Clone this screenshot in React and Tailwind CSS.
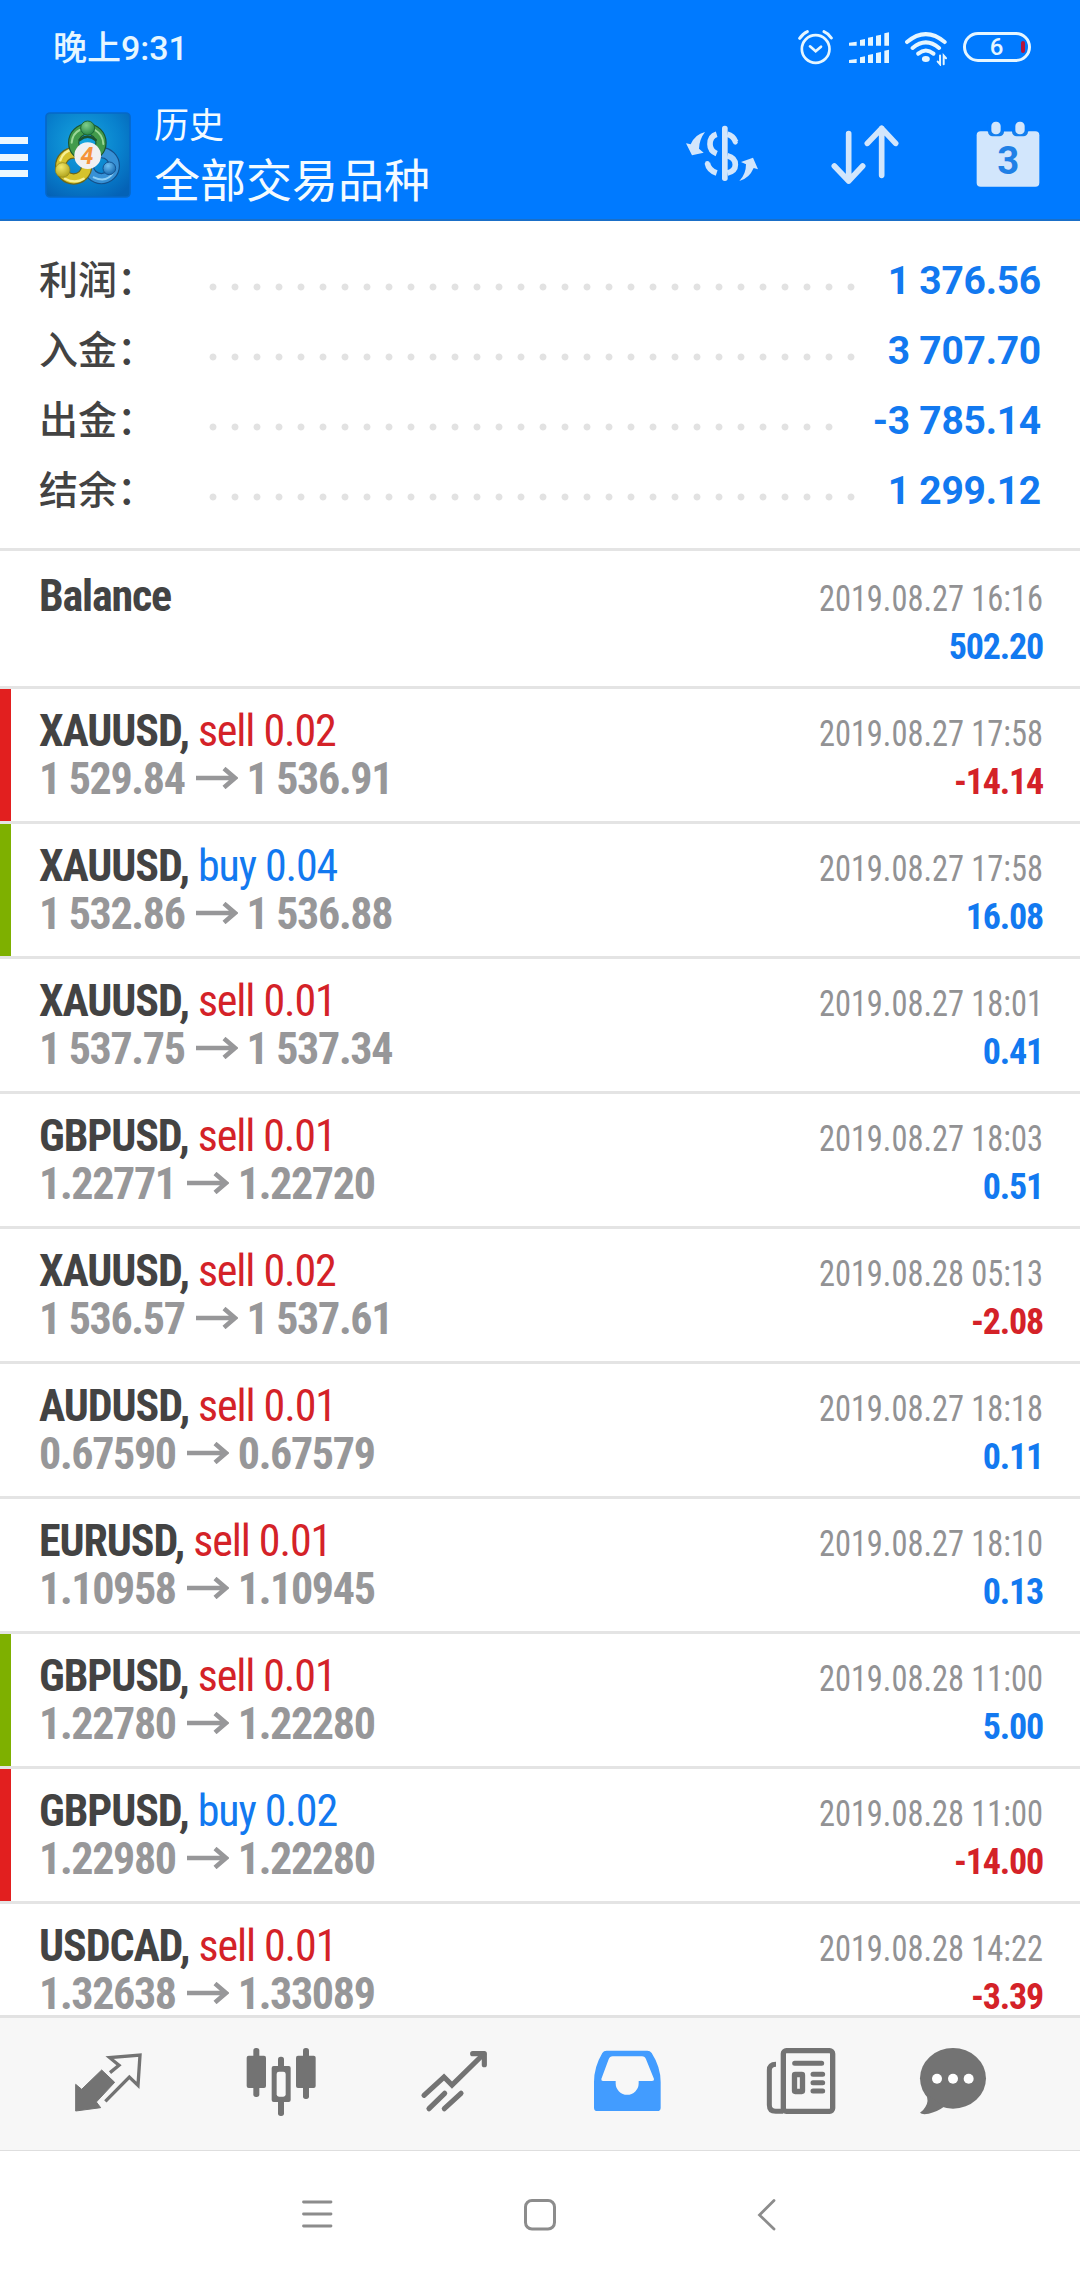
const SUMMARY = [
  { label: '利润：', value: '1 376.56', dots: 'w-[660px]' },
  { label: '入金：', value: '3 707.70', dots: 'w-[660px]' },
  { label: '出金：', value: '-3 785.14', dots: 'w-[638px]' },
  { label: '结余：', value: '1 299.12', dots: 'w-[660px]' },
];

const DEALS = [
  { symbol: 'XAUUSD', side: 'sell', volume: '0.02', open: '1 529.84', close: '1 536.91', time: '2019.08.27 17:58', profit: '-14.14', mark: 'sl' },
  { symbol: 'XAUUSD', side: 'buy', volume: '0.04', open: '1 532.86', close: '1 536.88', time: '2019.08.27 17:58', profit: '16.08', mark: 'tp' },
  { symbol: 'XAUUSD', side: 'sell', volume: '0.01', open: '1 537.75', close: '1 537.34', time: '2019.08.27 18:01', profit: '0.41' },
  { symbol: 'GBPUSD', side: 'sell', volume: '0.01', open: '1.22771', close: '1.22720', time: '2019.08.27 18:03', profit: '0.51' },
  { symbol: 'XAUUSD', side: 'sell', volume: '0.02', open: '1 536.57', close: '1 537.61', time: '2019.08.28 05:13', profit: '-2.08' },
  { symbol: 'AUDUSD', side: 'sell', volume: '0.01', open: '0.67590', close: '0.67579', time: '2019.08.27 18:18', profit: '0.11' },
  { symbol: 'EURUSD', side: 'sell', volume: '0.01', open: '1.10958', close: '1.10945', time: '2019.08.27 18:10', profit: '0.13' },
  { symbol: 'GBPUSD', side: 'sell', volume: '0.01', open: '1.22780', close: '1.22280', time: '2019.08.28 11:00', profit: '5.00', mark: 'tp' },
  { symbol: 'GBPUSD', side: 'buy', volume: '0.02', open: '1.22980', close: '1.22280', time: '2019.08.28 11:00', profit: '-14.00', mark: 'sl' },
  { symbol: 'USDCAD', side: 'sell', volume: '0.01', open: '1.32638', close: '1.33089', time: '2019.08.28 14:22', profit: '-3.39' },
];

const MARKS = { sl: 'bg-[#e21f1f]', tp: 'bg-[#7eb000]' };

/* ---------- status bar ---------- */

const SIGNAL = [
  [0, 23, 12],
  [33, 15, 20],
  [57, 15, 27],
  [81, 15, 33],
  [106, 14, 40],
];

function StatusBar() {
  return (
    <div className="flex h-24 justify-between pl-[53px] pr-[49px] text-[#e6f6ff]">
      <span className="text-[34px] leading-[96px] font-medium">晚上9:31</span>
      <div className="flex items-start gap-4 pt-[30px]">
        <svg width="35" height="36" viewBox="0 0 105 108" fill="none" stroke="currentColor" strokeWidth="8" strokeLinecap="round" aria-label="Alarm">
          <circle cx="53" cy="57" r="41.5" strokeWidth="8" />
          <path d="M36 49 L53 64 L69 50" />
          <path d="M5 25 Q14 11 28 5 M78 5 Q92 11 100 24" strokeWidth="9" />
        </svg>
        <svg width="40" height="36" viewBox="0 0 120 108" fill="currentColor" aria-label="Signal">
          {SIGNAL.map(([x, w, h]) => (
            <g key={x}>
              <path d={`M${x} ${50 - h} L${x + w} ${47 - h} V47 H${x} Z`} />
              <path d={`M${x} ${102 - h} L${x + w} ${99 - h} V99 H${x} Z`} />
            </g>
          ))}
        </svg>
        <svg width="42" height="36" viewBox="0 0 127 108" fill="none" stroke="currentColor" strokeWidth="12" strokeLinecap="round" aria-label="Wi-Fi">
          <path d="M6 36 Q63 -12 120 36 M23 54 Q63 20 103 54 M40 71 Q63 52 86 71" />
          <ellipse cx="63" cy="87" rx="12" ry="9" fill="currentColor" stroke="none" />
          <path d="M106 77 V103 L99 95 M117 103 V77 L124 85" strokeWidth="6" />
        </svg>
        <div className="mt-[2px] flex h-[30px] w-[68px] items-center rounded-full border-[3px] border-[#e6f6ff] pr-[3px]">
          <span className="flex-1 pl-1.5 text-center text-[24px] leading-none font-medium">6</span>
          <span className="h-3 w-1 rounded-full bg-[#b3143c]" />
        </div>
      </div>
    </div>
  );
}

/* ---------- toolbar ---------- */

function Logo() {
  return (
    <svg width="86" height="86" viewBox="0 0 258 258" aria-label="MetaTrader 4">
      <defs>
        <radialGradient id="tile" cx="0.45" cy="0.35" r="0.75">
          <stop offset="0" stopColor="#17a6de" />
          <stop offset="0.6" stopColor="#0880cd" />
          <stop offset="1" stopColor="#0462b6" />
        </radialGradient>
        <radialGradient id="green" cx="0.4" cy="0.3" r="0.8">
          <stop offset="0" stopColor="#7fce8c" />
          <stop offset="1" stopColor="#1c7d3a" />
        </radialGradient>
        <radialGradient id="yellow" cx="0.4" cy="0.3" r="0.8">
          <stop offset="0" stopColor="#f3ea6c" />
          <stop offset="1" stopColor="#a89a12" />
        </radialGradient>
        <radialGradient id="blue" cx="0.4" cy="0.3" r="0.8">
          <stop offset="0" stopColor="#6fc0f2" />
          <stop offset="1" stopColor="#0b5ea8" />
        </radialGradient>
      </defs>
      <rect x="3" y="3" width="252" height="252" rx="12" fill="url(#tile)" stroke="#0668c8" strokeWidth="5" />
      <g fill="none" strokeLinecap="round">
        <circle cx="169" cy="161" r="39" stroke="#14508a" strokeWidth="34" />
        <circle cx="169" cy="161" r="39" stroke="#3791d6" strokeWidth="27" />
        <path d="M146 196 Q186 214 206 180" stroke="#8fd0f6" strokeWidth="6" />
        <circle cx="86" cy="162" r="39" stroke="#6b661a" strokeWidth="34" />
        <circle cx="86" cy="162" r="39" stroke="#d6c22c" strokeWidth="27" />
        <path d="M46 145 Q56 116 84 113 M60 200 Q90 216 116 200" stroke="#f6f094" strokeWidth="7" />
        <circle cx="127" cy="92" r="41" stroke="#1b5430" strokeWidth="34" />
        <circle cx="127" cy="92" r="41" stroke="#429b4b" strokeWidth="27" />
        <path d="M80 92 Q83 64 104 54 M150 54 Q174 68 175 96" stroke="#9ad796" strokeWidth="6" />
        <path d="M104 84 Q128 64 152 84" stroke="#1b5430" strokeWidth="8" />
      </g>
      <circle cx="128" cy="48" r="21" fill="url(#green)" stroke="#1d6a37" strokeWidth="3" />
      <circle cx="53" cy="174" r="22" fill="url(#yellow)" stroke="#8a8220" strokeWidth="2" />
      <circle cx="193" cy="169" r="19" fill="url(#blue)" stroke="#145593" strokeWidth="3" />
      <circle cx="128" cy="131" r="40" fill="#f1f0f2" />
      <text x="126" y="156" textAnchor="middle" fontSize="70" fontWeight="700" fontStyle="italic" fill="#f5933a">4</text>
    </svg>
  );
}

function Toolbar() {
  return (
    <div className="flex h-[123px] items-start text-[#d2e6fc]">
      <div className="flex w-7 flex-col gap-[9.5px] pt-[41px]">
        <span className="h-[7px] bg-[#edf8ff]" />
        <span className="h-[7px] bg-[#edf8ff]" />
        <span className="h-[7px] bg-[#edf8ff]" />
      </div>
      <div className="pl-[17px] pt-4">
        <Logo />
      </div>
      <div className="flex-1 pl-[23px] pt-1 text-[#f4fbff]">
        <p className="text-[35px] leading-[54px]">历史</p>
        <h1 className="text-[46px] leading-[54px]">全部交易品种</h1>
      </div>
      <div className="flex pr-10 pt-[25px]">
        <svg width="72" height="66" viewBox="0 0 216 198" fill="currentColor" aria-label="Symbols">
          <rect x="108" y="14" width="17" height="166" rx="8" />
          <path d="M57 33 Q27 40 14 70 L0 67 L18 103 L53 95 L39 83 Q40 55 57 33 Z" />
          <path d="M160 180 Q180 160 180 130 L165 123 L201 110 L216 145 L203 141 Q190 172 160 180 Z" />
          <g fill="none" stroke="currentColor" strokeWidth="17">
            <path d="M92 40 Q72 46 72 70 Q72 90 92 98" />
            <path d="M124 40 Q142 44 149 63" />
            <path d="M124 104 Q148 110 148 131 Q148 150 124 156" />
            <path d="M64 126 Q68 148 92 156" />
          </g>
          <circle cx="148" cy="64" r="7" />
          <circle cx="64" cy="127" r="7" />
        </svg>
        <svg className="ml-[73px]" width="68" height="66" viewBox="0 0 204 198" fill="none" stroke="currentColor" strokeWidth="17" strokeLinecap="round" strokeLinejoin="round" aria-label="Sort">
          <path d="M53 38 V180 M10 135 L53 180 L95 135" />
          <path d="M152 163 V22 M109 67 L152 22 L194 67" />
        </svg>
        <svg className="ml-[77px]" width="64" height="66" viewBox="0 0 192 198" aria-label="Period">
          <rect x="2" y="31" width="188" height="166" rx="12" fill="currentColor" />
          <rect x="36" y="8" width="48" height="38" rx="14" fill="#147fee" />
          <rect x="108" y="8" width="48" height="38" rx="14" fill="#147fee" />
          <rect x="34" y="0" width="124" height="31" fill="#007aff" />
          <rect x="46" y="2" width="28" height="38" rx="13" fill="currentColor" />
          <rect x="118" y="2" width="28" height="38" rx="13" fill="currentColor" />
          <text x="97" y="160" textAnchor="middle" fontSize="115" fontWeight="700" fill="#1f80e6">3</text>
        </svg>
      </div>
    </div>
  );
}

/* ---------- history ---------- */

function SummaryRow({ label, value, dots }) {
  return (
    <div className="flex h-[70px] items-start text-[39px] leading-[70px]">
      <span className="w-[163px] font-medium text-[#434343]">{label}</span>
      <span className={`mt-[30px] h-[22px] ${dots} bg-[radial-gradient(circle,#e2e2e2_3px,transparent_3.9px)] bg-[length:22px_22px] bg-repeat-x`} />
      <span className="flex-1 text-right font-bold tracking-[-0.25px] text-[#1279f0]">{value}</span>
    </div>
  );
}

function RowRight({ time, profit }) {
  return (
    <div className="pt-[3px] text-right text-[36px]">
      <p className="origin-right scale-x-90 text-[#929294]">{time}</p>
      <p className={`font-bold tracking-[-1.2px] ${profit.startsWith('-') ? 'text-[#d42228]' : 'text-[#1279f0]'}`}>{profit}</p>
    </div>
  );
}

function DealRow({ symbol, side, volume, open, close, time, profit, mark }) {
  return (
    <li className="flex h-[135px] shrink-0 border-b-[3px] border-[#e4e4e4]">
      <span className={`w-[11px] ${mark ? MARKS[mark] : ''}`} />
      <div className="flex flex-1 justify-between pl-7 pr-[37px] pt-[18px] leading-[48px]">
        <div className="text-[44px] font-bold">
          <p className="tracking-[-1.1px] text-[#434343]">
            {symbol},{' '}
            <span className={`font-normal ${side === 'buy' ? 'text-[#1279f0]' : 'text-[#d42228]'}`}>
              {side} {volume}
            </span>
          </p>
          <p className="flex items-center tracking-[-1.35px] text-[#979799]">
            {open}
            <svg className="ml-[11px] mr-[9px] mt-[-2px]" width="42" height="22" viewBox="0 0 42 22" fill="none" stroke="currentColor" strokeWidth="4.5" aria-label="to">
              <path d="M0 11 H39 M28 1.5 L39 11 L28 20.5" />
            </svg>
            {close}
          </p>
        </div>
        <RowRight time={time} profit={profit} />
      </div>
    </li>
  );
}

/* ---------- tab bar ---------- */

function TabIcon({ label, active, children }) {
  return (
    <svg
      width="70"
      height="70"
      viewBox="0 0 210 210"
      aria-label={label}
      fill="currentColor"
      className={active ? 'text-[#429cff]' : 'text-[#737373]'}
    >
      {children}
    </svg>
  );
}

function TabBar() {
  return (
    <nav className="flex h-[136px] border-t-[3px] border-b border-t-[#e2e2e2] border-b-[#dedede] bg-[#f7f7f7] pl-[21.5px] pt-[29px]">
      <div className="flex w-[173px] justify-center">
        <TabIcon label="Quotes">
          <path d="M8 112 L26 127 L86 69 L125 106 L70 165 L83 182 L8 192 Z" stroke="currentColor" strokeWidth="3" strokeLinejoin="round" />
          <path d="M111 77 L138 55 L110 32 L201 24 L195 115 L169 90 L97 163" fill="none" stroke="currentColor" strokeWidth="10" />
        </TabIcon>
      </div>
      <div className="flex w-[173px] justify-center">
        <TabIcon label="Charts">
          <rect x="22" y="3" width="18" height="147" rx="8" />
          <rect x="2" y="26" width="58" height="97" rx="6" />
          <rect x="96" y="29" width="18" height="178" rx="8" />
          <rect x="77" y="57" width="57" height="108" rx="6" />
          <rect x="92" y="74" width="27" height="75" rx="7" fill="#f7f7f7" />
          <rect x="171" y="3" width="18" height="153" rx="8" />
          <rect x="150" y="26" width="59" height="97" rx="6" />
        </TabIcon>
      </div>
      <div className="flex w-[173px] justify-center">
        <TabIcon label="Trade">
          <g fill="none" stroke="currentColor" strokeWidth="15.5" strokeLinecap="round">
            <path d="M15 145 L75 90 L99 114 L194 21" />
            <path d="M161 20 H196 V53" strokeLinejoin="round" />
            <path d="M30 185 L77 139 M76 185 L126 139" />
          </g>
        </TabIcon>
      </div>
      <div className="flex w-[173px] justify-center">
        <TabIcon label="History" active>
          <path
            fillRule="evenodd"
            d="M44 11 H166 Q174 11 179 18 Q206 60 206 105 V182 Q206 192 196 192 H16 Q6 192 6 182 V105 Q6 60 31 18 Q35 11 44 11 Z M28 96 L50 37 Q53 28 62 28 H150 Q159 28 162 37 L186 96 Q187 102 180 102 H140 V109 A34.5 34.5 0 0 1 71 109 V102 H33 Q27 102 28 96 Z"
          />
        </TabIcon>
      </div>
      <div className="flex w-[175px] justify-center">
        <TabIcon label="News">
          <g fill="none" stroke="currentColor" strokeWidth="15" strokeLinecap="round">
            <rect x="52" y="11" width="148" height="182" rx="9" strokeWidth="16" />
            <path d="M30 52 Q10 52 10 70 V174 Q10 193 29 193 H52" strokeLinecap="butt" />
            <path d="M86 49 H167 M141 82 H170 M141 107 H170 M141 132 H170" />
            <rect x="85.5" y="82.5" width="24" height="51" rx="2" strokeWidth="16" />
          </g>
        </TabIcon>
      </div>
      <div className="flex w-[129px] justify-center">
        <TabIcon label="Chat">
          <ellipse cx="105" cy="94" rx="99" ry="91" />
          <path d="M24 140 Q34 162 22 180 Q16 191 6 197 Q12 204 32 200 Q56 196 80 178 Z" />
          <g fill="#fff">
            <circle cx="57" cy="95" r="15" />
            <circle cx="105" cy="95" r="15" />
            <circle cx="152" cy="95" r="15" />
          </g>
        </TabIcon>
      </div>
    </nav>
  );
}

function SystemNav() {
  return (
    <div className="flex h-[129px] items-start pl-[301px] pt-[47px] text-[#8c8c8c]">
      <svg width="32" height="34" viewBox="0 0 32 34" fill="none" stroke="currentColor" strokeWidth="2.8" strokeLinecap="round" aria-label="Menu">
        <path d="M2.5 4 H30 M2.5 16 H30 M2.5 28 H30" />
      </svg>
      <svg className="ml-[190px]" width="34" height="34" viewBox="0 0 34 34" fill="none" stroke="currentColor" strokeWidth="3" aria-label="Home">
        <rect x="2.5" y="2.5" width="29" height="28.5" rx="6.5" />
      </svg>
      <svg className="ml-[200px]" width="20" height="34" viewBox="0 0 20 34" fill="none" stroke="currentColor" strokeWidth="2.8" strokeLinecap="round" aria-label="Back">
        <path d="M17 2.5 L2.5 17 L17 31" />
      </svg>
    </div>
  );
}

export default function App() {
  return (
    <div className="flex h-[2280px] w-[1080px] flex-col overflow-hidden bg-white font-['Roboto','Noto_Sans_CJK_SC',sans-serif]">
      <header className="h-[221px] shrink-0 border-b-2 border-[#1a6fc8] bg-[#007aff]">
        <StatusBar />
        <Toolbar />
      </header>

      <section className="shrink-0 border-b-[3px] border-[#e4e4e4] pb-[22px] pl-[39px] pr-[39px] pt-[25px]">
        {SUMMARY.map((row) => (
          <SummaryRow key={row.label} {...row} />
        ))}
      </section>

      <ul className="flex min-h-0 flex-1 flex-col overflow-hidden font-['Roboto_Condensed','Noto_Sans_CJK_SC',sans-serif]">
        <li className="flex h-[138px] shrink-0 justify-between border-b-[3px] border-[#e4e4e4] pl-[39px] pr-[37px] pt-[21px] leading-[48px]">
          <p className="text-[44px] font-bold tracking-[-1.2px] text-[#434343]">Balance</p>
          <RowRight time="2019.08.27 16:16" profit="502.20" />
        </li>
        {DEALS.map((deal, i) => (
          <DealRow key={i} {...deal} />
        ))}
      </ul>

      <TabBar />
      <SystemNav />
    </div>
  );
}
